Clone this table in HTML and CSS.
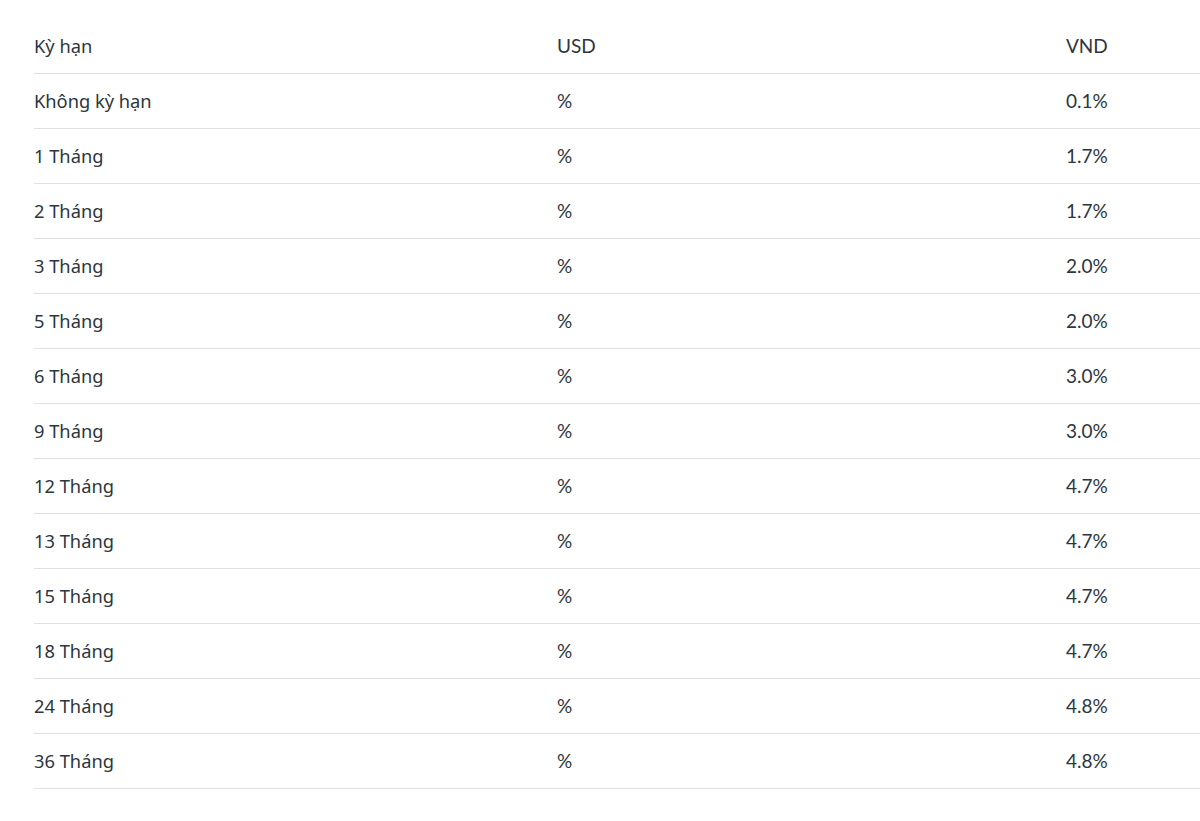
FILE: index.html
```html
<!DOCTYPE html>
<html lang="vi">
<head>
<meta charset="utf-8">
<title>Lãi suất</title>
<link rel="stylesheet" href="styles.css">
</head>
<body>
<table class="rates">
  <colgroup>
    <col class="c-term"><col class="c-usd"><col class="c-vnd">
  </colgroup>
  <thead>
    <tr><th class="term">Kỳ hạn</th><th>USD</th><th>VND</th></tr>
  </thead>
  <tbody>
    <tr><td class="term">Không kỳ hạn</td><td>%</td><td>0.1%</td></tr>
    <tr><td class="term">1 Tháng</td><td>%</td><td>1.7%</td></tr>
    <tr><td class="term">2 Tháng</td><td>%</td><td>1.7%</td></tr>
    <tr><td class="term">3 Tháng</td><td>%</td><td>2.0%</td></tr>
    <tr><td class="term">5 Tháng</td><td>%</td><td>2.0%</td></tr>
    <tr><td class="term">6 Tháng</td><td>%</td><td>3.0%</td></tr>
    <tr><td class="term">9 Tháng</td><td>%</td><td>3.0%</td></tr>
    <tr><td class="term">12 Tháng</td><td>%</td><td>4.7%</td></tr>
    <tr><td class="term">13 Tháng</td><td>%</td><td>4.7%</td></tr>
    <tr><td class="term">15 Tháng</td><td>%</td><td>4.7%</td></tr>
    <tr><td class="term">18 Tháng</td><td>%</td><td>4.7%</td></tr>
    <tr><td class="term">24 Tháng</td><td>%</td><td>4.8%</td></tr>
    <tr><td class="term">36 Tháng</td><td>%</td><td>4.8%</td></tr>
  </tbody>
</table>
</body>
</html>
```
FILE: styles.css
```css
html, body {
  margin: 0;
  padding: 0;
  background: #ffffff;
  overflow: hidden;
}
body {
  padding: 19px 0 0 34px;
  font-family: Lato, "Liberation Sans", sans-serif;
  color: #2c3640;
}
.rates {
  border-collapse: collapse;
  width: 1166px;
  table-layout: fixed;
}
.c-term { width: 523px; }
.c-usd { width: 509px; }
.c-vnd { width: 134px; }
.rates th,
.rates td {
  height: 54px;
  padding: 0;
  text-align: left;
  font-weight: 400;
  font-size: 19px;
  line-height: 22px;
  vertical-align: middle;
  border-bottom: 1px solid #e0e0e0;
}
.rates .term {
  font-family: "Noto Sans", Lato, sans-serif;
  font-size: 18.3px;
}
```
